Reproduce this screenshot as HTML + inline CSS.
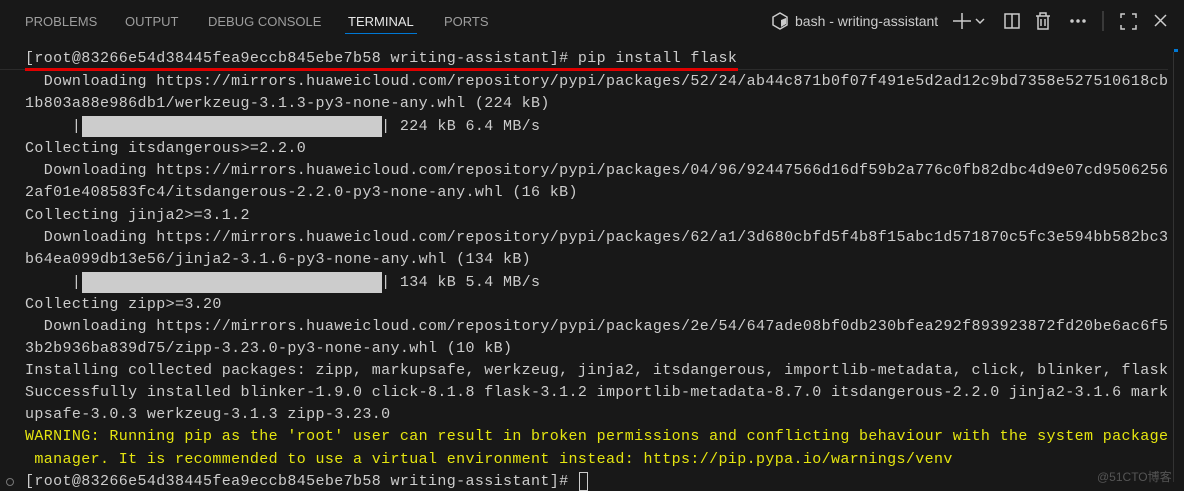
<!DOCTYPE html>
<html><head><meta charset="utf-8"><style>
html,body{margin:0;padding:0;background:#181818;width:1184px;height:491px;overflow:hidden;position:relative}
.tabs{position:absolute;top:14px;font-family:"Liberation Sans",sans-serif;font-size:13px;color:#9d9d9d}
.t{position:absolute;white-space:nowrap}
.l{position:absolute;left:25px;font-family:"Liberation Mono",monospace;font-size:15px;letter-spacing:0.37px;color:#cccccc;white-space:pre;line-height:22px}
.y{color:#e5e510}
.bar{position:absolute;background:#cccccc;height:21px}
</style></head><body>
<div class="tabs">
<span class="t" style="left:25px">PROBLEMS</span>
<span class="t" style="left:125px">OUTPUT</span>
<span class="t" style="left:208px">DEBUG CONSOLE</span>
<span class="t" style="left:348px;color:#e7e7e7">TERMINAL</span>
<span class="t" style="left:444px">PORTS</span>
</div>
<div style="position:absolute;left:345px;top:33px;width:72px;height:1px;background:#0078d4"></div>
<svg style="position:absolute;left:770px;top:11px" width="20" height="20" viewBox="0 0 20 20"><path d="M10 2 L17 6 L17 14 L10 18 L3 14 L3 6 Z" fill="none" stroke="#ccc" stroke-width="1.5"/><path d="M11 9 L16 7 L16 13 L11 16 Z" fill="#ccc"/></svg>
<span class="t" style="left:795px;top:13px;font-family:'Liberation Sans',sans-serif;font-size:14px;color:#cccccc">bash - writing-assistant</span>
<svg style="position:absolute;left:950px;top:10px" width="220" height="22" viewBox="0 0 220 22" fill="none" stroke="#ccc" stroke-width="1.5">
<path d="M12 3 V19 M3 11 H21"/><path d="M26 9 l4 4 4-4"/>
<rect x="55" y="4" width="14" height="14"/><path d="M62 4 V18"/>
<path d="M86 6 H100 M90 6 V3 H96 V6 M88 6 V19 H98 V6 M91 9 V16 M95 9 V16"/>
<circle cx="122" cy="11" r="1" fill="#ccc"/><circle cx="128" cy="11" r="1" fill="#ccc"/><circle cx="134" cy="11" r="1" fill="#ccc"/>
<path d="M153 1 V21" stroke="#444"/>
<path d="M171 8 V4 H175 M182 4 H186 V8 M186 15 V19 H182 M175 19 H171 V15"/>
<path d="M205 5 L216 16 M216 5 L205 16"/>
</svg>
<div style="position:absolute;left:0;top:69px;width:1168px;height:1px;background:#2b2b2b"></div>
<div style="position:absolute;left:1174px;top:49px;width:4px;height:3px;background:#0078d4"></div>
<div style="position:absolute;left:1173px;top:52px;width:1px;height:430px;background:#333"></div>
<div class="l" style="top:48px">[root@83266e54d38445fea9eccb845ebe7b58 writing-assistant]# pip install flask</div>
<div style="position:absolute;left:25px;top:68px;width:713px;height:3px;background:#e00000"></div>
<div class="l" style="top:71px">  Downloading https://mirrors.huaweicloud.com/repository/pypi/packages/52/24/ab44c871b0f07f491e5d2ad12c9bd7358e527510618cb</div>
<div class="l" style="top:93px">1b803a88e986db1/werkzeug-3.1.3-py3-none-any.whl (224 kB)</div>
<div class="l" style="top:116px">     |                                | 224 kB 6.4 MB/s</div>
<div class="bar" style="left:82px;top:116px;width:300px"></div>
<div class="l" style="top:138px">Collecting itsdangerous&gt;=2.2.0</div>
<div class="l" style="top:160px">  Downloading https://mirrors.huaweicloud.com/repository/pypi/packages/04/96/92447566d16df59b2a776c0fb82dbc4d9e07cd9506256</div>
<div class="l" style="top:182px">2af01e408583fc4/itsdangerous-2.2.0-py3-none-any.whl (16 kB)</div>
<div class="l" style="top:205px">Collecting jinja2&gt;=3.1.2</div>
<div class="l" style="top:227px">  Downloading https://mirrors.huaweicloud.com/repository/pypi/packages/62/a1/3d680cbfd5f4b8f15abc1d571870c5fc3e594bb582bc3</div>
<div class="l" style="top:249px">b64ea099db13e56/jinja2-3.1.6-py3-none-any.whl (134 kB)</div>
<div class="l" style="top:272px">     |                                | 134 kB 5.4 MB/s</div>
<div class="bar" style="left:82px;top:272px;width:300px"></div>
<div class="l" style="top:294px">Collecting zipp&gt;=3.20</div>
<div class="l" style="top:316px">  Downloading https://mirrors.huaweicloud.com/repository/pypi/packages/2e/54/647ade08bf0db230bfea292f893923872fd20be6ac6f5</div>
<div class="l" style="top:338px">3b2b936ba839d75/zipp-3.23.0-py3-none-any.whl (10 kB)</div>
<div class="l" style="top:360px">Installing collected packages: zipp, markupsafe, werkzeug, jinja2, itsdangerous, importlib-metadata, click, blinker, flask</div>
<div class="l" style="top:382px">Successfully installed blinker-1.9.0 click-8.1.8 flask-3.1.2 importlib-metadata-8.7.0 itsdangerous-2.2.0 jinja2-3.1.6 mark</div>
<div class="l" style="top:404px">upsafe-3.0.3 werkzeug-3.1.3 zipp-3.23.0</div>
<div class="l y" style="top:426px">WARNING: Running pip as the 'root' user can result in broken permissions and conflicting behaviour with the system package</div>
<div class="l y" style="top:449px"> manager. It is recommended to use a virtual environment instead: https://pip.pypa.io/warnings/venv</div>
<div style="position:absolute;left:6px;top:478px;width:6px;height:6px;border:1px solid #777;border-radius:50%"></div>
<div class="l" style="top:471px">[root@83266e54d38445fea9eccb845ebe7b58 writing-assistant]# </div>
<div style="position:absolute;left:579px;top:472px;width:9px;height:19px;border:1px solid #ccc;box-sizing:border-box"></div>
<div style="position:absolute;left:1097px;top:468px;font-family:'Liberation Sans','Noto Sans CJK SC',sans-serif;font-size:12px;color:#555">@51CTO博客</div>
</body></html>
